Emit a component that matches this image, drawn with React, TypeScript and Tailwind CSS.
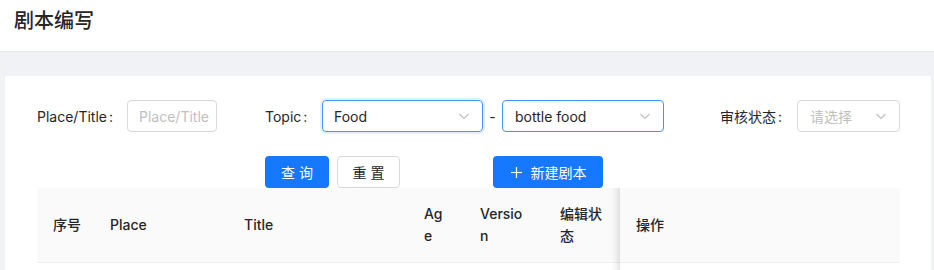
import React from "react";

const font = { fontFamily: 'Inter, "Noto Sans CJK SC", sans-serif' };

function Chevron() {
  return (
    <svg width="12" height="12" viewBox="0 0 12 12" fill="none">
      <polyline points="1.5,4 6,8.5 10.5,4" stroke="#bfbfbf" strokeWidth="1.1" />
    </svg>
  );
}

function Plus() {
  return (
    <svg width="13" height="13" viewBox="0 0 14 14" fill="none">
      <line x1="7" y1="1" x2="7" y2="13" stroke="#fff" strokeWidth="1.3" />
      <line x1="1" y1="7" x2="13" y2="7" stroke="#fff" strokeWidth="1.3" />
    </svg>
  );
}

export default function App() {
  const cols: { label: React.ReactNode; w: number; nowrap?: boolean }[] = [
    { label: "序号", w: 57, nowrap: true },
    { label: "Place", w: 134 },
    { label: "Title", w: 180 },
    { label: "Age", w: 56 },
    { label: "Version", w: 80 },
    { label: "编辑状态", w: 76 },
  ];
  return (
    <div className="w-[934px] h-[270px] overflow-hidden bg-[#f0f2f5] text-[14px] text-[#262626]" style={font}>
      <div className="h-[52px] bg-white border-b border-[#e8e8e8] flex items-center pl-[14px] pb-[10px]">
        <span className="text-[20px] leading-[28px] font-medium text-[#262626]">剧本编写</span>
      </div>
      <div className="mt-[24px] ml-[5px] mr-[3px] bg-white pt-[24px] pl-[32px] pr-[31px] h-[300px]">
        {/* form row */}
        <div className="flex items-center h-[32px]">
          <div className="flex items-center">
            <span className="w-[90px] whitespace-nowrap">Place/Title<span className="ml-[2px]">:</span></span>
            <div className="w-[90px] h-[32px] border border-[#d9d9d9] rounded-[4px] px-[11px] flex items-center overflow-hidden whitespace-nowrap text-[#bfbfbf]">
              Place/Title
            </div>
          </div>
          <div className="flex items-center ml-[48px]">
            <span className="w-[57px]">Topic<span className="ml-[2px]">:</span></span>
            <div className="w-[161px] h-[32px] border border-[#4096ff] rounded-[4px] pl-[11px] pr-[12px] flex items-center justify-between shadow-[0_0_0_2px_rgba(5,145,255,0.12)]">
              <span className="text-[#262626]">Food</span>
              <Chevron />
            </div>
            <span className="w-[19px] text-center">-</span>
            <div className="w-[162px] h-[32px] border border-[#4096ff] rounded-[4px] pl-[12px] pr-[12px] flex items-center justify-between">
              <span className="text-[#262626]">bottle food</span>
              <Chevron />
            </div>
          </div>
          <div className="flex items-center ml-[56px]">
            <span className="w-[77px]">审核状态<span className="ml-[2px]">:</span></span>
            <div className="w-[103px] h-[32px] border border-[#d9d9d9] rounded-[4px] pl-[12px] pr-[12px] flex items-center justify-between">
              <span className="text-[#bfbfbf]">请选择</span>
              <Chevron />
            </div>
          </div>
        </div>
        {/* buttons */}
        <div className="flex items-center mt-[24px] pl-[228px] h-[32px]">
          <button className="w-[64px] h-[32px] rounded-[4px] bg-[#1677ff] text-white tracking-[4px] pl-[4px]">查询</button>
          <button className="w-[63px] h-[32px] ml-[8px] rounded-[4px] bg-white border border-[#d9d9d9] text-[#262626] tracking-[4px] pl-[4px]">重置</button>
          <button className="w-[110px] h-[32px] ml-[93px] rounded-[4px] bg-[#1677ff] text-white flex items-center justify-center gap-[8px]">
            <Plus />
            <span>新建剧本</span>
          </button>
        </div>
        {/* table */}
        <table className="table-fixed border-collapse w-[863px]">
          <colgroup>
            {cols.map((c, i) => (
              <col key={i} style={{ width: c.w }} />
            ))}
            <col style={{ width: 280 }} />
          </colgroup>
          <thead>
            <tr className="bg-[#fafafa]">
              {cols.map((c, i) => (
                <th
                  key={i}
                  className={
                    c.nowrap
                      ? "pl-[16px] pr-[8px] py-[15px] text-left font-medium leading-[22px] whitespace-nowrap border-b border-[#f0f0f0] text-[#262626]"
                      : "px-[16px] py-[15px] text-left font-medium leading-[22px] break-all border-b border-[#f0f0f0] text-[#262626]"
                  }
                >
                  {c.label}
                </th>
              ))}
              <th className="relative px-[16px] py-[15px] text-left font-medium leading-[22px] border-b border-[#f0f0f0] text-[#262626]">
                <div className="absolute top-0 bottom-[-60px] left-0 w-[30px] -translate-x-full shadow-[inset_-10px_0_8px_-8px_rgba(0,0,0,0.15)]" />
                操作
              </th>
            </tr>
          </thead>
          <tbody>
            <tr>
              {cols.map((c, i) => (
                <td key={i} className="h-[54px] border-b border-[#f0f0f0]" />
              ))}
              <td className="h-[54px] border-b border-[#f0f0f0]" />
            </tr>
          </tbody>
        </table>
      </div>
    </div>
  );
}
